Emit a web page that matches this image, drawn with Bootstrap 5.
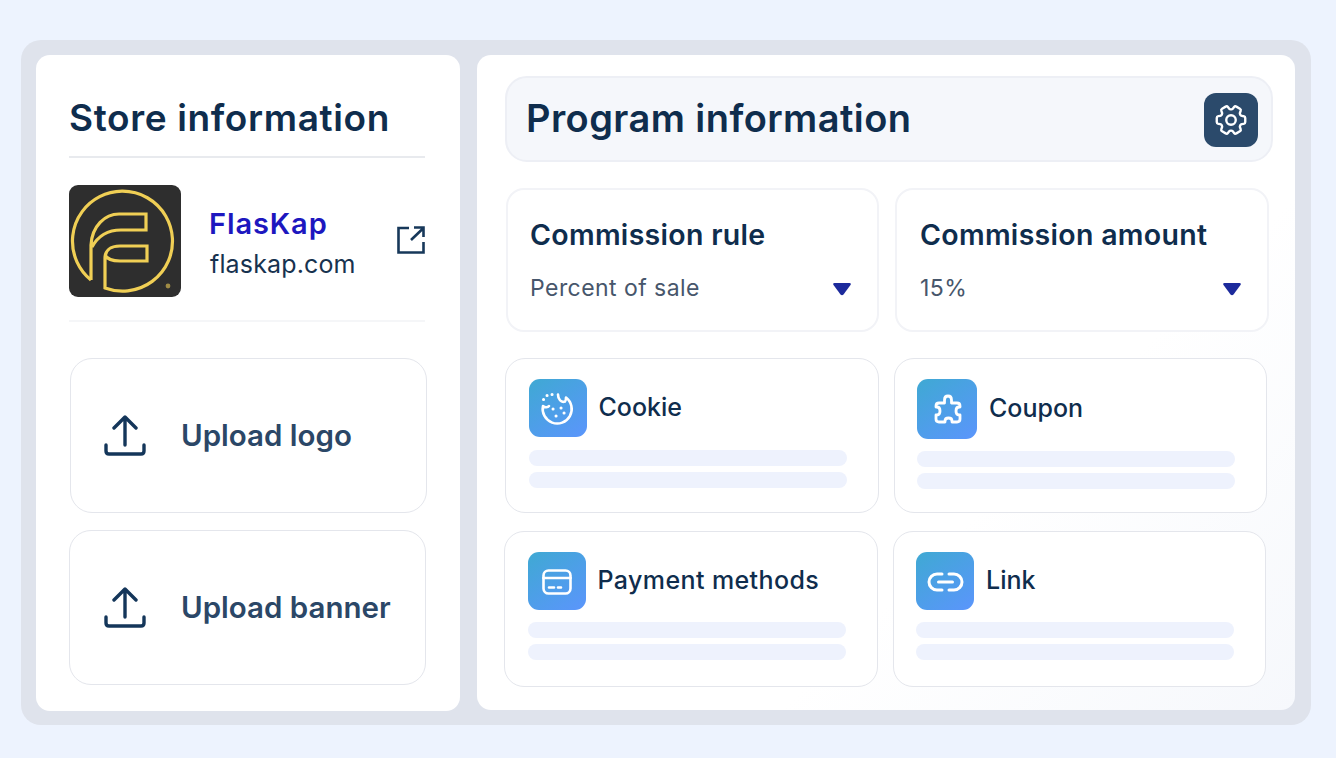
<!DOCTYPE html>
<html lang="en">
<head>
    <meta charset="UTF-8">
    <meta name="viewport" content="width=device-width, initial-scale=1.0">
    <title>Store and program information</title>
    <link href="https://cdn.jsdelivr.net/npm/bootstrap@5.3.0/dist/css/bootstrap.min.css" rel="stylesheet">
    <style>
        body {
            background: #edf3fe;
            font-family: Inter, "Noto Sans", sans-serif;
            color: #0f2d4d;
            overflow: hidden;
        }

        .frame {
            width: 1290px;
            height: 685px;
            margin: 40px 0 0 21px;
            padding: 15px;
            gap: 17px;
            background: #dfe3ec;
            border-radius: 20px;
        }

        .store-panel {
            width: 424px;
            height: 656px;
            padding: 0 33px;
            background: #fff;
            border-radius: 14px;
        }

        .store-title {
            height: 103px;
            margin: 0 2px 0 0;
            font-size: 37px;
            font-weight: 600;
            line-height: 126px;
            letter-spacing: .63px;
            white-space: nowrap;
            border-bottom: 2px solid #e8eaee;
        }

        .store-row {
            height: 164px;
            padding-top: 27px;
            margin-right: 2px;
            border-bottom: 2px solid #f5f6f8;
        }

        .logo-box {
            width: 112px;
            height: 112px;
            border-radius: 9px;
            background: #2e2e2e;
            flex: none;
        }

        .store-text {
            padding-top: 21px;
        }

        .store-name {
            margin: 0 0 5px 28px;
            font-size: 29px;
            font-weight: 600;
            line-height: 36px;
            color: #1d17bf;
            letter-spacing: .9px;
        }

        .store-url {
            margin-left: 29px;
            font-size: 25px;
            line-height: 34px;
            letter-spacing: .15px;
            color: #17324f;
        }

        .open-icon {
            margin-top: 41px;
        }

        .upload-box {
            height: 155px;
            width: 357px;
            gap: 34px;
            padding-left: 32px;
            border: 1.5px solid #e4e6ec;
            border-radius: 22px;
            font-size: 29.500px;
            font-weight: 600;
            color: #2b4767;
        }

        .upload-first {
            margin: 36px 0 17px 1px;
        }

        .upload-second {
            padding-left: 33px;
        }

        .program-panel {
            width: 818px;
            height: 655px;
            padding: 21px 0 0 28px;
            background: linear-gradient(135deg, #fff 65%, #f6f8fc 100%);
            border-radius: 14px;
        }

        .program-head {
            width: 768px;
            height: 86px;
            padding: 0 13px 0 19px;
            background: #f5f7fb;
            border: 2px solid #edeff5;
            border-radius: 22px;
        }

        .program-title {
            margin: 0;
            font-size: 38px;
            font-weight: 600;
            letter-spacing: .42px;
        }

        .gear-btn {
            width: 54px;
            height: 54px;
            margin-top: 2px;
            border-radius: 12px;
            background: #2b4a6b;
        }

        .rule-row {
            gap: 16px;
            margin: 26px 0 26px 1px;
        }

        .rule-box {
            width: 373px;
            height: 144px;
            padding: 27px 26px 0 22px;
            background: #fff;
            border: 2px solid #f2f3f7;
            border-radius: 18px;
        }

        .rule-box + .rule-box {
            width: 374px;
            padding-left: 23px;
        }

        .rule-title {
            margin: 0 0 20px;
            font-size: 28.500px;
            font-weight: 600;
            line-height: 36px;
            letter-spacing: .3px;
        }

        .rule-value {
            font-size: 23px;
            line-height: 30px;
            letter-spacing: .45px;
            color: #47566b;
        }

        .rule-caret {
            margin-top: 3px;
        }

        .perk-row {
            gap: 15px;
        }

        .perk-row + .perk-row {
            margin: 18px 0 0 -1px;
        }

        .perk-box {
            width: 373.500px;
            height: 155px;
            padding: 20px 31px 0 22.500px;
            background: #fff;
            border: 1.5px solid #e4e6ec;
            border-radius: 20px;
        }

        .perk-row + .perk-row .perk-box {
            height: 156px;
        }

        .perk-tile {
            width: 58px;
            height: 58px;
            margin-right: 12px;
            border-radius: 11px;
            background: linear-gradient(145deg, #3fa9d3, #5b95fc);
            flex: none;
        }

        .perk-tile-wide {
            width: 60px;
            height: 60px;
            margin-bottom: -1px;
        }

        .perk-name {
            font-size: 25px;
            font-weight: 500;
            line-height: 34px;
            margin-top: -2px;
        }

        .perk-name-wide {
            letter-spacing: .4px;
        }

        .skeleton-bar {
            height: 16px;
            margin-top: 6px;
            background: #eef2fd;
            border-radius: 8px;
        }

        .skeleton-first {
            margin-top: 13px;
        }

        .perk-row + .perk-row .skeleton-first {
            margin-top: 12px;
        }
    </style>
</head>
<body>
    <div class="frame d-flex">
        <!-- store column -->
        <div class="store-panel">
            <h2 class="store-title">Store information</h2>

            <div class="store-row d-flex align-items-start">
                <div class="logo-box">
                    <svg width="112" height="112" viewBox="0 0 112 112" fill="none" stroke="#f0cf55" stroke-width="3.200">
                        <path d="M22 95A50 50 0 1 1 36 103V73C36 66 41 61 51 61H78V76H51C44 76 38 74 36 70"/>
                        <path d="M22 95V60C23 41 36 29 50 29H77V45H52C38 45 29 51 23 62"/>
                        <circle cx="99" cy="101" r="2.400" fill="#a08c45" stroke="none"/>
                    </svg>
                </div>
                <div class="store-text flex-grow-1">
                    <div class="store-name">FlasKap</div>
                    <div class="store-url">flaskap.com</div>
                </div>
                <svg class="open-icon" width="28" height="28" viewBox="0 0 28 28" fill="none" stroke="#17385a" stroke-width="2.600">
                    <path d="M12 2H1.500V26.500H26.500V16"/>
                    <path d="M14 14L26 2.500M17 1.500H26.500V11"/>
                </svg>
            </div>

            <div class="upload-box upload-first d-flex align-items-center">
                <svg width="44" height="42" viewBox="0 0 44 42" fill="none" stroke="#14365a" stroke-width="3.400" stroke-linecap="round" stroke-linejoin="round">
                    <path d="M22 30V3M11 13L22 2L33 13"/>
                    <path d="M3 30V36Q3 39 6 39H38Q41 39 41 36V30"/>
                </svg>
                <span>Upload logo</span>
            </div>
            <div class="upload-box upload-second d-flex align-items-center">
                <svg width="44" height="42" viewBox="0 0 44 42" fill="none" stroke="#14365a" stroke-width="3.400" stroke-linecap="round" stroke-linejoin="round">
                    <path d="M22 30V3M11 13L22 2L33 13"/>
                    <path d="M3 30V36Q3 39 6 39H38Q41 39 41 36V30"/>
                </svg>
                <span>Upload banner</span>
            </div>
        </div>

        <!-- program column -->
        <div class="program-panel">
            <div class="program-head d-flex align-items-center justify-content-between">
                <h2 class="program-title">Program information</h2>
                <div class="gear-btn d-flex align-items-center justify-content-center">
                    <svg width="38" height="38" viewBox="0 0 24 24" fill="none" stroke="#fff" stroke-width="1.500" transform="rotate(90)">
                        <path d="M9.594 3.94c.09-.542.56-.94 1.11-.94h2.593c.55 0 1.02.398 1.11.94l.213 1.281c.063.374.313.686.645.87.074.04.147.083.22.127.325.196.72.257 1.075.124l1.217-.456a1.125 1.125 0 0 1 1.37.49l1.296 2.247a1.125 1.125 0 0 1-.26 1.431l-1.003.827c-.293.241-.438.613-.43.992a7.723 7.723 0 0 1 0 .255c-.008.378.137.75.43.991l1.004.827c.424.35.534.955.26 1.43l-1.298 2.247a1.125 1.125 0 0 1-1.369.491l-1.217-.456c-.355-.133-.75-.072-1.076.124a6.47 6.47 0 0 1-.22.128c-.331.183-.581.495-.644.869l-.213 1.281c-.09.543-.56.94-1.11.94h-2.594c-.55 0-1.019-.398-1.11-.94l-.213-1.281c-.062-.374-.312-.686-.644-.87a6.52 6.52 0 0 1-.22-.127c-.325-.196-.72-.257-1.076-.124l-1.217.456a1.125 1.125 0 0 1-1.369-.49l-1.297-2.247a1.125 1.125 0 0 1 .26-1.431l1.004-.827c.292-.24.437-.613.43-.991a6.932 6.932 0 0 1 0-.255c.007-.38-.138-.751-.43-.992l-1.004-.827a1.125 1.125 0 0 1-.26-1.43l1.297-2.247a1.125 1.125 0 0 1 1.37-.491l1.216.456c.356.133.751.072 1.076-.124.072-.044.146-.086.22-.128.332-.183.582-.495.644-.869l.214-1.28Z"/>
                        <circle cx="12" cy="12" r="3"/>
                    </svg>
                </div>
            </div>

            <div class="rule-row d-flex">
                <div class="rule-box">
                    <div class="rule-title">Commission rule</div>
                    <div class="d-flex align-items-center justify-content-between">
                        <span class="rule-value">Percent of sale</span>
                        <svg class="rule-caret" width="18" height="13" viewBox="0 0 18 13" fill="#1c2a9c"><path d="M1.500 0H16.500Q18.500 0 17.500 2L10.500 11.500Q9 13 7.500 11.500L.5 2Q-.5 0 1.500 0Z"/></svg>
                    </div>
                </div>
                <div class="rule-box">
                    <div class="rule-title">Commission amount</div>
                    <div class="d-flex align-items-center justify-content-between">
                        <span class="rule-value">15%</span>
                        <svg class="rule-caret" width="18" height="13" viewBox="0 0 18 13" fill="#1c2a9c"><path d="M1.500 0H16.500Q18.500 0 17.500 2L10.500 11.500Q9 13 7.500 11.500L.5 2Q-.5 0 1.500 0Z"/></svg>
                    </div>
                </div>
            </div>

            <div class="perk-row d-flex">
                <div class="perk-box">
                    <div class="d-flex align-items-center">
                        <div class="perk-tile">
                            <svg width="58" height="58" viewBox="0 0 58 58" fill="none" stroke="#fff" stroke-width="2.600" stroke-linecap="round" stroke-linejoin="round">
                                <path d="M29 15.500C29 20 32 24 36 22.500C37 21.500 37 20 37 18.500A14.500 14.500 0 1 1 14 27C16 29 19 28.500 20 27"/>
                                <path stroke-width="3" d="M14.500 20.500h.1M18 16.500h.1M23 15.500h.1M24 30h.1M32 29h.1M35 34h.1M27 37h.1"/>
                            </svg>
                        </div>
                        <span class="perk-name">Cookie</span>
                    </div>
                    <div class="skeleton-bar skeleton-first"></div>
                    <div class="skeleton-bar"></div>
                </div>
                <div class="perk-box">
                    <div class="d-flex align-items-center">
                        <div class="perk-tile perk-tile-wide">
                            <svg width="60" height="60" viewBox="0 0 60 60" fill="none" stroke="#fff" stroke-width="2.800" stroke-linecap="round" stroke-linejoin="round">
                                <path d="M27.500 24V21C27.500 18 29 17 31 17S34.500 18 34.500 21V24H40Q43 24 43 27V28H42C38 28 38 36 42 36H43V40Q43 43 40 43H35V42C35 38 28 38 28 42V43H22Q19 43 19 40V36H20C24 36 24 28 20 28H19V27Q19 24 22 24Z"/>
                            </svg>
                        </div>
                        <span class="perk-name">Coupon</span>
                    </div>
                    <div class="skeleton-bar skeleton-first"></div>
                    <div class="skeleton-bar"></div>
                </div>
            </div>

            <div class="perk-row d-flex">
                <div class="perk-box">
                    <div class="d-flex align-items-center">
                        <div class="perk-tile">
                            <svg width="58" height="58" viewBox="0 0 58 58" fill="none" stroke="#fff" stroke-width="2.600" stroke-linecap="round" stroke-linejoin="round">
                                <rect x="15.500" y="18.500" width="27" height="23" rx="5"/>
                                <path d="M15.500 26H42.500"/>
                                <path d="M21 35.500H26M30 35.500H33"/>
                            </svg>
                        </div>
                        <span class="perk-name perk-name-wide">Payment methods</span>
                    </div>
                    <div class="skeleton-bar skeleton-first"></div>
                    <div class="skeleton-bar"></div>
                </div>
                <div class="perk-box">
                    <div class="d-flex align-items-center">
                        <div class="perk-tile">
                            <svg width="58" height="58" viewBox="0 0 58 58" fill="none" stroke="#fff" stroke-width="3" stroke-linecap="round" stroke-linejoin="round">
                                <path d="M26 22H21A8 8 0 0 0 21 38H26"/>
                                <path d="M33 22H38A8 8 0 0 1 38 38H33"/>
                                <path d="M22.500 30H36.500"/>
                            </svg>
                        </div>
                        <span class="perk-name">Link</span>
                    </div>
                    <div class="skeleton-bar skeleton-first"></div>
                    <div class="skeleton-bar"></div>
                </div>
            </div>
        </div>
    </div>

    <script src="https://cdn.jsdelivr.net/npm/bootstrap@5.3.0/dist/js/bootstrap.bundle.min.js"></script>
</body>
</html>
